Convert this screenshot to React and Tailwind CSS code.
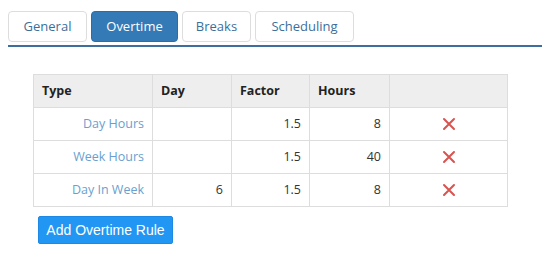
import React from 'react';

const tabs = [
  { label: 'General', w: 'w-[79px]' },
  { label: 'Overtime', w: 'w-[87px]', active: true },
  { label: 'Breaks', w: 'w-[69px]' },
  { label: 'Scheduling', w: 'w-[99px]' },
];

const rules = [
  { type: 'Day Hours', day: '', factor: '1.5', hours: '8' },
  { type: 'Week Hours', day: '', factor: '1.5', hours: '40' },
  { type: 'Day In Week', day: '6', factor: '1.5', hours: '8' },
];

function RemoveIcon() {
  return (
    <svg width="14" height="14" viewBox="0 0 14 14" className="mx-auto">
      <path d="M2 2 L12 12 M12 2 L2 12" stroke="#d9534f" strokeWidth="2" strokeLinecap="round" />
    </svg>
  );
}

export default function App() {
  return (
    <div className="w-[542px] h-[257px] bg-white font-['Open_Sans',sans-serif] text-[12.5px] text-[#333]">
      {/* tab strip */}
      <div className="pt-[11px] pl-2">
        <div className="flex gap-1">
          {tabs.map((t) => (
            <div
              key={t.label}
              className={`${t.w} h-[31px] flex items-center justify-center rounded-[4px] border text-[13px] ${
                t.active ? 'bg-[#337ab7] border-[#2e6da4] text-white' : 'bg-white border-[#ddd] text-[#3a6f9c]'
              }`}
            >
              {t.label}
            </div>
          ))}
        </div>
        <div className="mt-[3px] h-[2px] bg-[#3d6f9e]"></div>
      </div>

      {/* rules table */}
      <div className="pl-[33px] pt-[27px]">
        <table className="border-collapse border border-[#ccc] table-fixed w-[474px]">
          <colgroup>
            <col className="w-[119px]" />
            <col className="w-[79px]" />
            <col className="w-[78px]" />
            <col className="w-[80px]" />
            <col className="w-[118px]" />
          </colgroup>
          <thead>
            <tr className="bg-[#eeeeee] h-[33px]">
              <th className="border border-[#ddd] px-2 text-left font-bold text-[#222]">Type</th>
              <th className="border border-[#ddd] px-2 text-left font-bold text-[#222]">Day</th>
              <th className="border border-[#ddd] px-2 text-left font-bold text-[#222]">Factor</th>
              <th className="border border-[#ddd] px-2 text-left font-bold text-[#222]">Hours</th>
              <th className="border border-[#ddd] px-2"></th>
            </tr>
          </thead>
          <tbody>
            {rules.map((r) => (
              <tr key={r.type} className="h-[33px]">
                <td className="border border-[#ddd] px-2 text-right text-[#6a9fcf]">{r.type}</td>
                <td className="border border-[#ddd] px-2 text-right">{r.day}</td>
                <td className="border border-[#ddd] px-2 text-right">{r.factor}</td>
                <td className="border border-[#ddd] px-2 text-right">{r.hours}</td>
                <td className="border border-[#ddd] px-2 text-center"><RemoveIcon /></td>
              </tr>
            ))}
          </tbody>
        </table>
      </div>

      <div className="pl-[38px] pt-[9px]">
        <button className="w-[135px] h-[28px] rounded-[2px] border border-[#1e88e5] bg-[#2196f3] text-white text-[14px] font-['Liberation_Sans',Arial,sans-serif]">
          Add Overtime Rule
        </button>
      </div>
    </div>
  );
}
